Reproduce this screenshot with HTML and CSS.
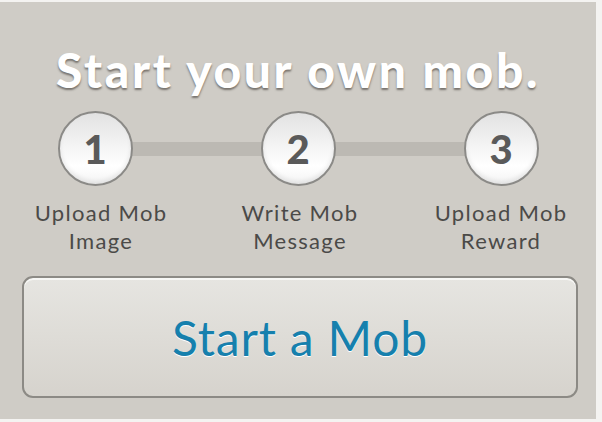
FILE: index.html
```html
<!DOCTYPE html>
<html>
<head>
<meta charset="utf-8">
<link rel="stylesheet" href="styles.css">
</head>
<body>
<div class="panel">
  <h1 class="title">Start your own mob.</h1>
  <div class="steps">
    <div class="track"></div>
    <div class="step">
      <div class="circle">1</div>
      <div class="label label-first">Upload Mob<br>Image</div>
    </div>
    <div class="step">
      <div class="circle">2</div>
      <div class="label label-mid">Write Mob<br>Message</div>
    </div>
    <div class="step">
      <div class="circle">3</div>
      <div class="label">Upload Mob<br>Reward</div>
    </div>
  </div>
  <button class="start">Start a Mob</button>
</div>
</body>
</html>
```
FILE: styles.css
```css
html, body {
  margin: 0;
  padding: 0;
  background: #f4f3f1;
}
.panel {
  margin-top: 2px;
  width: 596px;
  height: 417px;
  background: #cfccc6;
  box-sizing: border-box;
  padding-top: 41px;
  display: flex;
  flex-direction: column;
  align-items: center;
  font-family: "Lato", "DejaVu Sans", sans-serif;
}
.title {
  margin: 0;
  font-size: 48px;
  line-height: 54px;
  font-weight: 900;
  color: #ffffff;
  letter-spacing: 2.6px;
  text-shadow: 0 2px 2px rgba(60, 55, 50, 0.6);
}
.steps {
  position: relative;
  margin-top: 14px;
  width: 556px;
  display: flex;
  justify-content: space-between;
}
.track {
  position: absolute;
  left: 90px;
  right: 90px;
  top: 31px;
  height: 14px;
  background: #bcb9b3;
}
.step {
  position: relative;
  width: 150px;
  display: flex;
  flex-direction: column;
  align-items: center;
}
.circle {
  width: 75px;
  height: 75px;
  box-sizing: border-box;
  border: 2px solid #8b8a87;
  border-radius: 50%;
  background: linear-gradient(#e2e2e2, #ffffff 75%, #f4f4f4);
  box-shadow: inset 0 -3px 4px rgba(0,0,0,0.08);
  display: flex;
  align-items: center;
  justify-content: center;
  font-size: 40px;
  font-weight: 900;
  color: #5a5a5a;
}
.label {
  margin-top: 13px;
  font-size: 22px;
  line-height: 28px;
  letter-spacing: 1.3px;
  color: #4b4a48;
  text-align: center;
  white-space: nowrap;
}
.label-first {
  padding-left: 12px;
}
.label-mid {
  padding-left: 4px;
}
.start {
  margin-top: 21px;
  margin-left: 4px;
  width: 556px;
  height: 122px;
  box-sizing: border-box;
  border: 2px solid #8c8a85;
  border-radius: 11px;
  background: linear-gradient(#e6e5e1, #d6d3cd);
  box-shadow: inset 0 2px 0 #f7f7f5;
  font-family: "Lato", "DejaVu Sans", sans-serif;
  font-size: 48px;
  letter-spacing: 0.8px;
  color: #1680ad;
  text-shadow: 0 1px 0 #ffffff;
  padding: 0;
}
```
